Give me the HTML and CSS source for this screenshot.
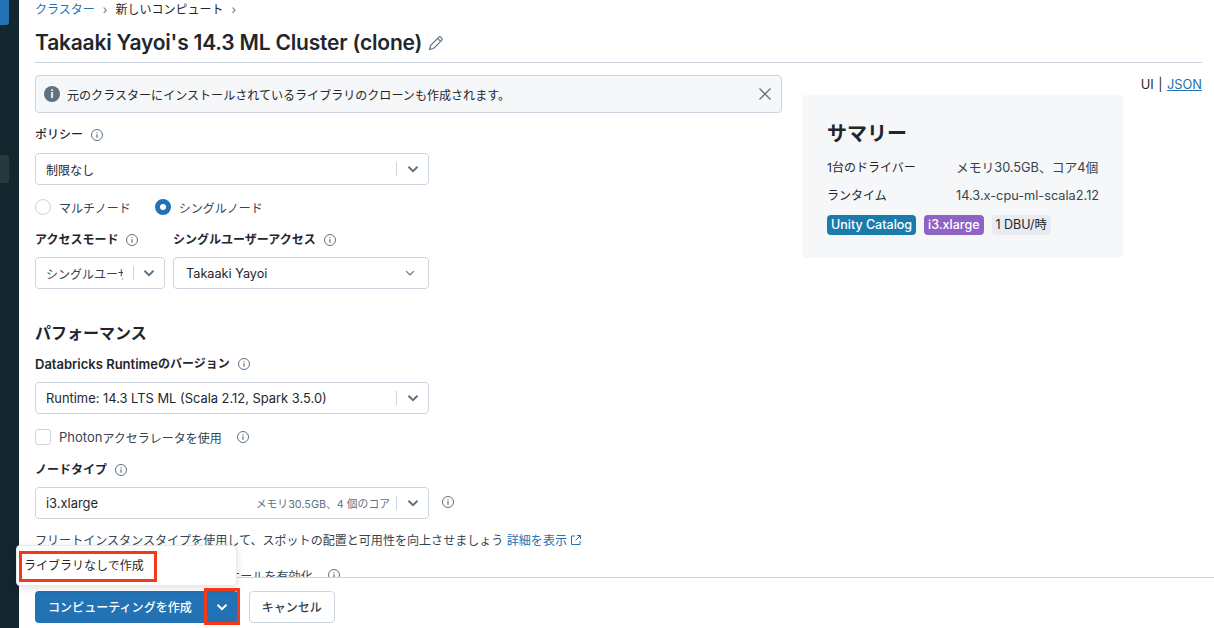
FILE: index.html
```html
<!DOCTYPE html>
<html lang="ja">
<head>
<meta charset="utf-8">
<title>コンピューティングを作成</title>
<link rel="stylesheet" href="styles.css">
</head>
<body>
<svg class="defs" width="0" height="0" aria-hidden="true">
  <symbol id="info" viewBox="0 0 14 14">
    <circle cx="7" cy="7" r="5.5" fill="none" stroke="currentColor" stroke-width="1"/>
    <path d="M7 6.2v3.6M7 4.2v1" fill="none" stroke="currentColor" stroke-width="1.2"/>
  </symbol>
  <symbol id="chev" viewBox="0 0 14 14">
    <path d="M2.5 4.8 7 9.2l4.5-4.4" fill="none" stroke="currentColor" stroke-width="2"/>
  </symbol>
  <symbol id="chev-thin" viewBox="0 0 12 12">
    <path d="M2.2 4.2 6 8l3.8-3.8" fill="none" stroke="currentColor" stroke-width="1.2"/>
  </symbol>
</svg>
<div class="app">
  <aside class="rail">
    <div class="rail-active"></div>
    <div class="rail-item"></div>
  </aside>
  <main class="main">
    <div class="scroll">
      <nav class="crumbs">
        <a class="link">クラスター</a><span class="sep">›</span><span>新しいコンピュート</span><span class="sep">›</span>
      </nav>
      <header class="title-row">
        <h1>Takaaki Yayoi's 14.3 ML Cluster (clone)</h1>
        <svg class="pencil" viewBox="0 0 16 16"><path d="M1.5 14.5l1-4 8.4-8.4a1.3 1.3 0 0 1 1.8 0l1.2 1.2a1.3 1.3 0 0 1 0 1.8l-8.4 8.4zM9.6 3.4l3 3" fill="none" stroke="currentColor" stroke-width="1.2"/></svg>
      </header>
      <div class="columns">
        <section class="form">
          <div class="alert">
            <span class="alert-icon">i</span>
            <span class="alert-text">元のクラスターにインストールされているライブラリのクローンも作成されます。</span>
            <svg class="close" viewBox="0 0 14 14"><path d="M1.5 1.5l11 11M12.5 1.5l-11 11" fill="none" stroke="currentColor" stroke-width="1.3"/></svg>
          </div>
          <div class="label lb-policy">ポリシー<svg class="i"><use href="#info"/></svg></div>
          <div class="select"><span class="val cjk">制限なし</span><span class="divider"></span><svg class="chev"><use href="#chev"/></svg></div>
          <div class="radios">
            <label class="radio"><span class="dot"></span>マルチノード</label>
            <label class="radio"><span class="dot on"></span>シングルノード</label>
          </div>
          <div class="pair">
            <div class="col-a">
              <div class="label">アクセスモード<svg class="i"><use href="#info"/></svg></div>
              <div class="select"><span class="val cjk clip">シングルユーザー</span><span class="divider"></span><svg class="chev"><use href="#chev"/></svg></div>
            </div>
            <div class="col-b">
              <div class="label">シングルユーザーアクセス<svg class="i"><use href="#info"/></svg></div>
              <div class="select plain"><span class="val">Takaaki Yayoi</span><svg class="chev thin"><use href="#chev-thin"/></svg></div>
            </div>
          </div>
          <h2>パフォーマンス</h2>
          <div class="label"><span class="latin">Databricks Runtime</span>のバージョン<svg class="i"><use href="#info"/></svg></div>
          <div class="select"><span class="val">Runtime: 14.3 LTS ML (Scala 2.12, Spark 3.5.0)</span><span class="divider"></span><svg class="chev"><use href="#chev"/></svg></div>
          <label class="check"><span class="box"></span><span class="latin">Photon</span>アクセラレータを使用<svg class="i wide"><use href="#info"/></svg></label>
          <div class="label">ノードタイプ<svg class="i"><use href="#info"/></svg></div>
          <div class="select-row">
            <div class="select"><span class="val">i3.xlarge</span><span class="hint">メモリ30.5GB、4 個のコア</span><span class="divider"></span><svg class="chev"><use href="#chev"/></svg></div>
            <svg class="i after"><use href="#info"/></svg>
          </div>
          <p class="fleet">フリートインスタンスタイプを使用して、スポットの配置と可用性を向上させましょう <a class="link">詳細を表示<svg class="ext" viewBox="0 0 12 12"><path d="M5 2H1.5v8.5H10V7M7 1.5h3.5V5M10.5 1.5 5.5 6.5" fill="none" stroke="currentColor" stroke-width="1"/></svg></a></p>
          <label class="check autoscale"><span class="box"></span>ローカルストレージのオートスケールを有効化<svg class="i wide"><use href="#info"/></svg></label>
        </section>
        <aside class="side">
          <div class="switch">UI | <a class="json">JSON</a></div>
          <div class="summary">
            <h3>サマリー</h3>
            <div class="sum-row"><span class="k">1台のドライバー</span><span class="v">メモリ30.5GB、コア4個</span></div>
            <div class="sum-row"><span class="k">ランタイム</span><span class="v">14.3.x-cpu-ml-scala2.12</span></div>
            <div class="tags"><span class="tag uc">Unity Catalog</span><span class="tag vm">i3.xlarge</span><span class="tag dbu">1 DBU/時</span></div>
          </div>
        </aside>
      </div>
    </div>
    <footer class="footer">
      <div class="split">
        <button class="primary">コンピューティングを作成</button>
        <button class="primary caret"><svg class="chev-w"><use href="#chev"/></svg></button>
      </div>
      <button class="cancel">キャンセル</button>
      <div class="menu"><span class="menu-item">ライブラリなしで作成</span></div>
      <span class="mark mark-menu"></span>
      <span class="mark mark-caret"></span>
    </footer>
  </main>
</div>
</body>
</html>
```
FILE: styles.css
```css
* { box-sizing: border-box; }
html, body { margin: 0; height: 100%; overflow: hidden; }
body { font-family: Inter, "Noto Sans CJK JP", sans-serif; font-size: 13px; color: #1f272d; background: #fff; }
.defs { position: absolute; }
.app { display: flex; height: 628px; }
.rail { width: 19px; flex: none; background: #14262e; display: flex; flex-direction: column; }
.rail-active { width: 9px; height: 25px; background: #2272b4; border-radius: 0 0 3px 0; }
.rail-item { width: 9px; height: 28px; margin-top: 130px; background: #25393f; border-radius: 0 3px 3px 0; }
.main { flex: 1; min-width: 0; display: flex; flex-direction: column; position: relative; }
.scroll { height: 577px; overflow: hidden; padding: 0 12px 0 16px; }
.link { color: #2272b4; }
.crumbs { height: 18px; display: flex; align-items: center; font-size: 12px; line-height: 17px; }
.sep { color: #5f7281; margin: 0 8px; font-size: 12px; }
.title-row { height: 45px; display: flex; align-items: center; border-bottom: 1px solid #cbd5e0; padding-top: 11px; padding-bottom: 6px; }
h1 { margin: 0; font-size: 21px; line-height: 28px; font-weight: 600; letter-spacing: -0.2px; color: #1f272d; }
.pencil { width: 16px; height: 16px; margin-left: 6px; color: #5f7281; }
.columns { display: flex; }
.form { width: 747px; flex: none; padding-top: 12px; }
.alert { height: 38px; border: 1px solid #cbd5e0; border-radius: 4px; background: #f5f7f9; display: flex; align-items: center; padding: 0 8px; }
.alert-icon { width: 16px; height: 16px; border-radius: 50%; background: #5f7281; color: #fff; font-size: 11px; font-weight: 700; display: flex; align-items: center; justify-content: center; flex: none; }
.alert-text { margin-left: 7px; flex: 1; font-size: 12.05px; }
.close { width: 14px; height: 14px; color: #5f7281; flex: none; margin-right: 1px; }
.label { display: flex; align-items: center; height: 18px; font-size: 12px; font-weight: 600; line-height: 18px; }
.latin { font-size: 13px; }
.lb-policy { margin-top: 13px; font-weight: 500; }
.i { width: 14px; height: 14px; color: #5f7281; margin-left: 7px; flex: none; }
.select { width: 394px; height: 32px; margin-top: 9px; border: 1px solid #cbd5e0; border-radius: 4px; background: #fff; display: flex; align-items: center; padding: 0 8px 0 10px; font-size: 13px; }
.val { flex: 1; white-space: nowrap; overflow: hidden; font-size: 12.9px; }
.val.cjk { font-size: 12px; }
.divider { width: 1px; height: 14px; background: #cbd5e0; margin: 0 9px 0 6px; flex: none; }
.chev { width: 14px; height: 14px; color: #5f7281; flex: none; }
.thin { width: 12px; height: 12px; }
.radios { display: flex; gap: 24px; margin-top: 13px; height: 18px; align-items: center; }
.radio { display: flex; align-items: center; gap: 8px; font-size: 12px; color: #37444f; }
.dot { width: 16px; height: 16px; border-radius: 50%; border: 1px solid #cbd5e0; background: #fff; flex: none; }
.dot.on { border: 5px solid #2272b4; }
.pair { display: flex; gap: 8px; margin-top: 15px; width: 394px; }
.pair .select { margin-top: 8px; width: 100%; }
.col-a { width: 130px; flex: none; }
.col-b { flex: 1; min-width: 0; }
.col-a .select { padding-right: 8px; }
.col-a .divider { margin: 0 8px 0 10px; }
.plain { padding-left: 12px !important; padding-right: 12px !important; }
.plain .val { font-size: 12.7px; }
.clip { color: #37444f; }
h2 { margin: 33px 0 0; font-size: 16px; line-height: 22px; font-weight: 600; }
h2 + .label { margin-top: 11px; }
.check { display: flex; align-items: center; height: 18px; margin-top: 14px; font-size: 12px; color: #37444f; }
.box { width: 16px; height: 16px; border: 1px solid #cbd5e0; border-radius: 3px; margin-right: 8px; background: #fff; flex: none; }
.wide { margin-left: 14px; }
.check + .label { margin-top: 15px; }
.check + .label + .select-row .select { margin-top: 8px; }
.select-row { display: flex; align-items: center; }
.after { margin: 5px 0 0 12px; }
.hint { font-size: 10.8px; color: #5f7281; white-space: nowrap; }
.fleet { margin: 13px 0 0; font-size: 12.05px; line-height: 18px; color: #37444f; white-space: nowrap; }
.ext { width: 12px; height: 12px; margin-left: 3px; vertical-align: -1px; }
.autoscale { margin-top: 16px; font-size: 12.1px; }
.side { flex: 1; position: relative; padding: 32px 0 0 20px; }
.switch { font-size: 12.8px; word-spacing: 1px; text-align: right; line-height: 18px; position: absolute; right: 0; top: 13px; }
.json { color: #2272b4; text-decoration: underline; }
.summary { width: 321px; height: 163px; background: #f5f7f9; border-radius: 4px; padding: 25px; }
h3 { margin: 0 0 11px; font-size: 20px; line-height: 28px; font-weight: 600; }
.sum-row { display: flex; font-size: 12px; line-height: 18px; margin-bottom: 10px; white-space: nowrap; }
.k { width: 129px; flex: none; }
.v { color: #37444f; font-size: 12.75px; }
.tags { display: flex; gap: 8px; margin-top: 0; }
.tag { height: 20px; line-height: 20px; padding: 0 4px; border-radius: 4px; font-size: 12.5px; font-weight: 500; white-space: nowrap; }
.uc { background: #1a7cad; color: #fff; }
.vm { background: #8f63c5; color: #fff; }
.dbu { background: #e8ecf0; color: #1f272d; font-weight: 400; }
.footer { height: 51px; border-top: 1px solid #cbd5e0; background: #fff; display: flex; align-items: center; padding: 7px 0 0 16px; position: relative; }
.split { display: flex; }
.primary { height: 32px; border: 0; background: #2272b4; color: #fff; font: 500 12.05px Inter, "Noto Sans CJK JP", sans-serif; padding: 0 13px; border-radius: 4px 0 0 4px; }
.caret { width: 32px; padding: 0; margin-left: 1px; border-radius: 0 4px 4px 0; display: flex; align-items: center; justify-content: center; }
.chev-w { width: 14px; height: 14px; color: #fff; }
.cancel { margin-left: 11px; height: 32px; padding: 0 12px; border: 1px solid #cbd5e0; border-radius: 4px; background: #fff; color: #37444f; font: 500 12px Inter, "Noto Sans CJK JP", sans-serif; }
.menu { position: absolute; left: -3px; bottom: 42px; width: 221px; height: 41px; background: #fff; border: 1px solid #e4e9ed; border-radius: 4px; box-shadow: 0 2px 8px rgba(0,0,0,.12); display: flex; align-items: center; padding-left: 7px; padding-bottom: 2px; font-size: 12px; }
.mark { position: absolute; border: 3px solid #f2391c; }
.mark-menu { left: 0; top: -27px; width: 138px; height: 31px; }
.mark-caret { left: 185px; top: 10px; width: 36px; height: 37px; }
```
